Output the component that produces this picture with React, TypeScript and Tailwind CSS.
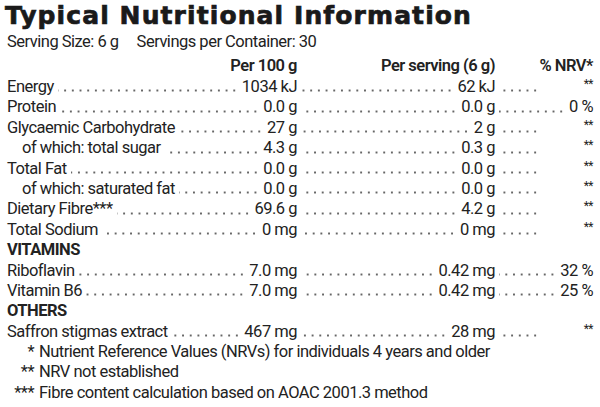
type Row = {
  label: string;
  indent?: boolean;
  per100: string;
  perServing: string;
  nrv: string;
};

const nutrients: Row[] = [
  { label: "Energy", per100: "1034 kJ", perServing: "62 kJ", nrv: "**" },
  { label: "Protein", per100: "0.0 g", perServing: "0.0 g", nrv: "0 %" },
  { label: "Glycaemic Carbohydrate", per100: "27 g", perServing: "2 g", nrv: "**" },
  { label: "of which: total sugar", indent: true, per100: "4.3 g", perServing: "0.3 g", nrv: "**" },
  { label: "Total Fat", per100: "0.0 g", perServing: "0.0 g", nrv: "**" },
  { label: "of which: saturated fat", indent: true, per100: "0.0 g", perServing: "0.0 g", nrv: "**" },
  { label: "Dietary Fibre***", per100: "69.6 g", perServing: "4.2 g", nrv: "**" },
  { label: "Total Sodium", per100: "0 mg", perServing: "0 mg", nrv: "**" },
];

const vitamins: Row[] = [
  { label: "Riboflavin", per100: "7.0 mg", perServing: "0.42 mg", nrv: "32 %" },
  { label: "Vitamin B6", per100: "7.0 mg", perServing: "0.42 mg", nrv: "25 %" },
];

const others: Row[] = [
  { label: "Saffron stigmas extract", per100: "467 mg", perServing: "28 mg", nrv: "**" },
];

// dot leader drawn as a repeating background so it fills any width
function Leader() {
  return (
    <span className="mx-[4px] mb-[5px] h-[3px] min-w-0 flex-1 self-end bg-[radial-gradient(circle,#666_0.9px,transparent_1.3px)] bg-[length:7.7px_3px] bg-[position:right_center] bg-repeat-x" />
  );
}

function NutrientRow({ row }: { row: Row }) {
  const stars = row.nrv === "**";
  return (
    <div className="grid h-[20.4px] grid-cols-[290px_198px_98px]">
      <div className="flex">
        <span className={row.indent ? "whitespace-nowrap pl-[15px]" : "whitespace-nowrap"}>{row.label}</span>
        <Leader />
        <span className="whitespace-nowrap">{row.per100}</span>
      </div>
      <div className="flex">
        <Leader />
        <span className="whitespace-nowrap">{row.perServing}</span>
      </div>
      <div className="flex">
        <Leader />
        {stars ? (
          <span className="w-[50px] whitespace-nowrap pt-[1px] text-right text-[12px] leading-[12px]">**</span>
        ) : (
          <span className="whitespace-nowrap">{row.nrv}</span>
        )}
      </div>
    </div>
  );
}

export default function App() {
  return (
    <div
      className="h-[407px] w-[600px] overflow-hidden bg-white px-[7px] text-[#222]"
      style={{ fontFamily: 'Roboto, "Liberation Sans", sans-serif' }}
    >
      <h1
        className="-ml-[2px] pt-[1px] text-[25px] font-bold leading-[30px] tracking-[1.1px] text-[#1a1a1a] [-webkit-text-stroke:0.7px_#1a1a1a]"
        style={{ fontFamily: '"DejaVu Sans", Inter, sans-serif' }}
      >
        Typical Nutritional Information
      </h1>
      <div className="text-[16.5px] leading-[22px] tracking-[-0.5px]">
        Serving Size: 6 g<span className="ml-[18px]">Servings per Container: 30</span>
      </div>
      <div className="mt-[2px] text-[16.5px] leading-[20.4px] tracking-[-0.5px]">
        <div className="grid h-[22px] grid-cols-[290px_198px_98px] items-center font-semibold">
          <span className="text-right">Per 100 g</span>
          <span className="text-right">Per serving (6 g)</span>
          <span className="text-right">% NRV*</span>
        </div>
        {nutrients.map((r) => (
          <NutrientRow key={r.label} row={r} />
        ))}
        <div className="h-[20.4px] font-bold">VITAMINS</div>
        {vitamins.map((r) => (
          <NutrientRow key={r.label} row={r} />
        ))}
        <div className="h-[20.4px] font-bold">OTHERS</div>
        {others.map((r) => (
          <NutrientRow key={r.label} row={r} />
        ))}
        <div className="flex h-[20.4px]">
          <span className="w-[27px] text-right">*</span>
          <span className="ml-[5px]">Nutrient Reference Values (NRVs) for individuals 4 years and older</span>
        </div>
        <div className="flex h-[20.4px]">
          <span className="w-[27px] text-right">**</span>
          <span className="ml-[5px]">NRV not established</span>
        </div>
        <div className="flex h-[20.4px]">
          <span className="w-[27px] text-right">***</span>
          <span className="ml-[5px]">Fibre content calculation based on AOAC 2001.3 method</span>
        </div>
      </div>
    </div>
  );
}
